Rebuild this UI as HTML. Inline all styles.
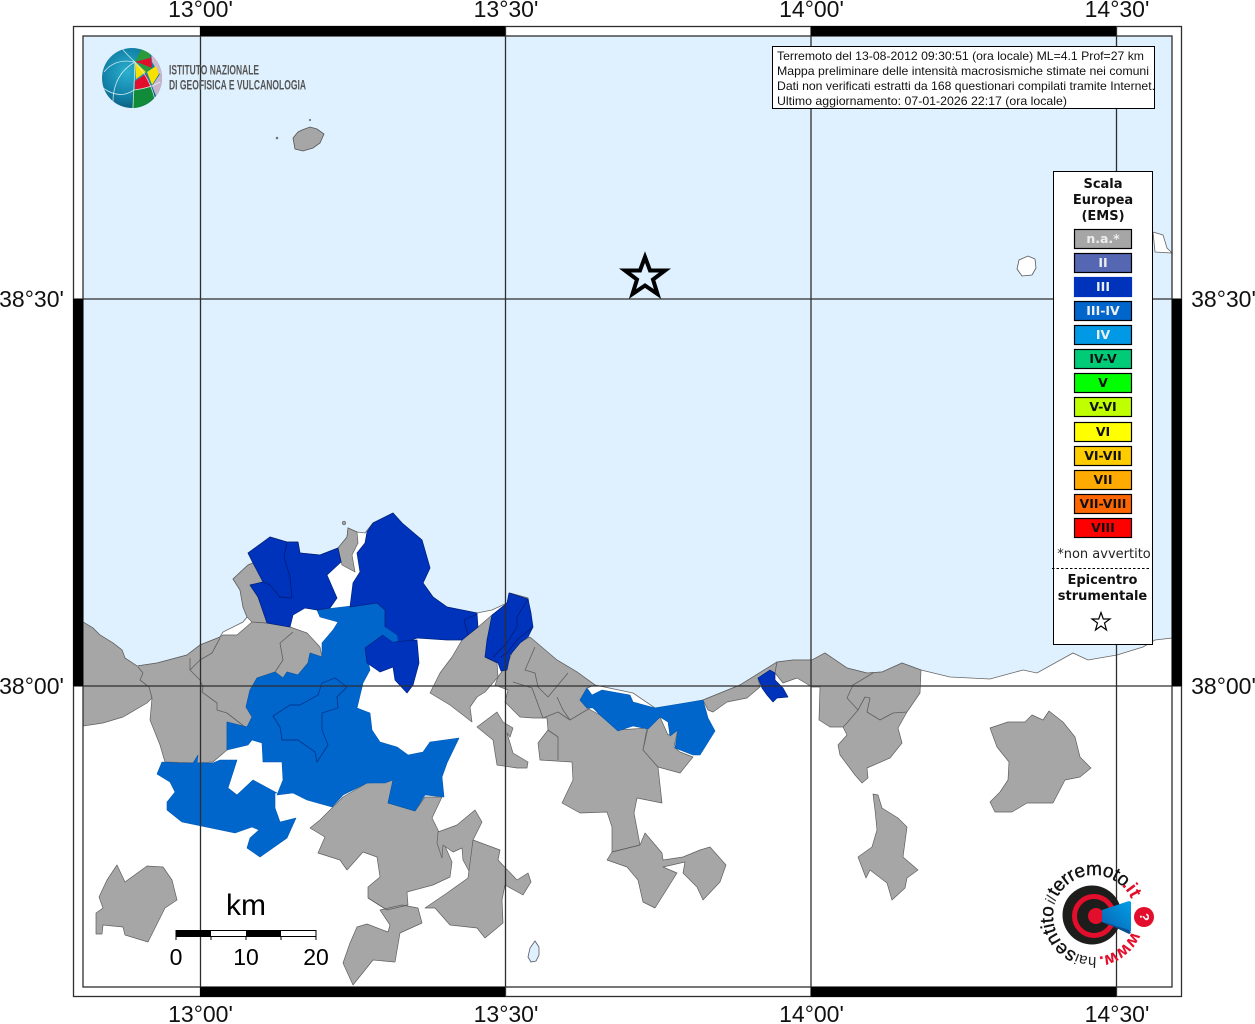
<!DOCTYPE html>
<html><head><meta charset="utf-8"><title>Mappa intensità macrosismiche</title>
<style>html,body{margin:0;padding:0;background:#fff}svg{display:block}
text{font-family:"Liberation Sans",sans-serif}
.d text,text.d{font-family:"DejaVu Sans",sans-serif}
.g polygon{fill:#a6a6a6;stroke:#5f5f5f;stroke-width:.7;stroke-linejoin:round}
.b3 polygon,polygon.b3{fill:#0033bb;stroke:#00237f;stroke-width:.7;stroke-linejoin:round}
.b4 polygon,polygon.b4{fill:#0066cc;stroke:#0059b3;stroke-width:.6;stroke-linejoin:round}
.il{fill:none;stroke:#5f5f5f;stroke-width:.8;stroke-linejoin:round}
.il2{fill:none;stroke:#00388f;stroke-width:.9;stroke-linejoin:round}
.il3{fill:none;stroke:#001f80;stroke-width:.9;stroke-linejoin:round}
.sw text{font-family:"DejaVu Sans",sans-serif;font-weight:bold;font-size:12.5px;text-anchor:middle}
.sw rect{stroke:#000;stroke-width:1.2}
</style></head><body>
<svg width="1255" height="1024" viewBox="0 0 1255 1024" xmlns="http://www.w3.org/2000/svg">
<defs>
<radialGradient id="gl" cx=".42" cy=".4" r=".7"><stop offset="0" stop-color="#2ab0cf"/><stop offset=".6" stop-color="#117fa5"/><stop offset="1" stop-color="#0b4f6e"/></radialGradient>
<linearGradient id="cone" x1="0" y1="1" x2="1" y2="0"><stop offset="0" stop-color="#0a5fb0"/><stop offset="1" stop-color="#00a0e6"/></linearGradient>
<clipPath id="ball"><circle cx="132" cy="78" r="30"/></clipPath>
<path id="ring" d="M1132 931.400 A41 41 0 0 1 1056 900.600 A41 41 0 0 1 1132 931.400"/>
</defs>
<rect width="1255" height="1024" fill="#fff"/>

<!-- sea -->
<polygon fill="#dff1fe" stroke="#666" stroke-width=".8" points="83,622 93,628 100,635 113,643 122,650 125,658 137,666 157,663 187,655 200,645 220,637 223,632 243,622 247,617 243,607 240,590 233,579 248,565 253,563 248,553 270,537 287,542 298,542 300,553 320,555 338,548 347,537 348,528 357,532 365,533 373,523 393,513 402,523 422,540 430,568 423,583 433,597 447,607 477,613 492,610 507,603 510,593 528,598 532,627 528,637 532,640 557,660 577,672 595,685 633,693 655,708 687,703 703,700 740,685 777,662 793,660 812,660 825,653 847,668 867,673 882,672 902,663 921,670 950,677 990,679 1023,670 1037,673 1073,653 1088,660 1117,655 1143,647 1155,640 1172,638 1172,36 83,36"/>
<polygon fill="#fff" stroke="#666" stroke-width=".8" points="1153,232 1163,235 1167,248 1172,253 1155,252"/>
<polygon fill="#fff" stroke="#555" stroke-width=".8" points="1019,260 1028,256 1035,259 1036,268 1032,275 1022,276 1017,269"/>
<polygon fill="#dff1fe" stroke="#556" stroke-width=".8" points="535,941 539,947 539,955 536,961 531,962 528,957 530,948"/>
<polygon fill="#a6a6a6" stroke="#555" stroke-width=".8" points="293,138 298,132 302,130 310,127 317,129 324,134 320,143 313,148 303,151 295,149"/>
<circle cx="277" cy="138" r="1.300" fill="#777"/><circle cx="310" cy="120" r="1.100" fill="#777"/><circle cx="344" cy="523" r="1.800" fill="#a6a6a6" stroke="#555" stroke-width=".6"/>

<g class="g">
<polygon points="83,622 93,628 100,635 113,643 122,650 125,658 137,666 157,663 187,655 200,645 220,637 223,635 237,635 252,622 267,623 290,627 307,633 320,647 322,657 310,653 308,663 298,675 287,672 283,678 275,672 257,678 250,690 246,707 252,717 247,727 227,722 227,750 213,762 197,763 165,762 160,745 150,720 152,698 147,703 123,717 103,723 83,726"/>
<polygon points="233,579 248,565 253,563 263,582 250,585 258,597 267,623 252,622 247,617 243,607 240,590"/>
<polygon points="338,548 347,537 348,528 357,532 358,543 352,555 355,572 342,565"/>
<polygon points="492,615 485,657 497,663 498,677 485,692 477,697 470,707 472,722 450,705 430,693 440,673 452,657 462,640 477,628"/>
<polygon points="530,637 557,660 577,672 595,685 587,688 580,700 587,708 600,715 618,730 647,728 643,750 658,767 662,803 637,798 634,813 640,845 612,852 612,827 607,812 580,813 562,803 573,780 572,762 540,760 538,743 548,730 547,718 533,718 520,717 505,702 508,690 495,685 498,677 508,663 515,645"/>
<polygon points="648,728 660,717 668,735 678,729 674,747 680,752 693,757 680,773 658,767 643,750"/>
<polygon points="703,700 740,685 777,662 775,673 758,678 760,687 747,698 727,702 713,712 708,710"/>
<polygon points="777,662 793,660 812,660 825,653 847,668 867,673 882,672 902,663 921,670 920,693 907,712 898,728 902,743 890,758 867,768 868,778 862,783 855,775 840,755 838,745 847,735 843,727 830,727 819,720 820,687 812,687 797,678 783,683 775,673"/>
<polygon points="873,794 878,795 882,808 898,818 907,827 903,857 918,870 907,878 905,888 892,900 887,883 870,870 866,878 858,857 872,847 877,830 875,810"/>
<polygon points="990,728 1008,722 1025,722 1032,715 1043,720 1049,711 1063,722 1075,737 1080,757 1091,768 1080,777 1065,780 1053,803 1027,803 1012,812 995,812 990,802 1000,792 1008,780 1009,762 997,747"/>
<polygon points="607,860 612,852 640,845 645,833 662,853 663,860 683,857 700,850 710,847 726,865 720,882 703,900 697,887 683,873 685,862 663,867 677,873 655,908 643,902 638,880 627,867"/>
<polygon points="477,727 497,712 503,722 513,728 510,737 507,733 513,753 528,762 527,768 517,768 497,765 493,740"/>
<polygon points="310,828 320,820 332,808 343,797 367,783 385,782 393,780 388,803 415,811 425,797 442,797 432,818 438,830 452,862 450,877 433,885 407,892 408,905 387,910 368,898 368,887 380,877 377,857 363,852 347,870 340,860 318,853 325,837"/>
<polygon points="438,832 457,825 475,810 482,822 473,840 470,873 463,860 462,848 453,852 443,845 442,858 437,843"/>
<polygon points="473,840 500,850 498,860 517,880 528,873 531,882 523,895 505,885 502,900 503,923 485,938 477,928 450,925 435,908 425,908 447,893 468,878"/>
<polygon points="380,910 402,905 418,908 422,923 400,933 395,962 373,960 353,985 343,963 350,943 357,927 367,924 388,932 390,925"/>
<polygon points="117,865 125,882 147,866 163,867 172,880 177,900 165,908 148,942 125,935 123,927 103,925 102,934 96,934 96,913 103,908 99,897 107,880"/>
</g>
<polyline class="il" points="138,667 143,673 140,680 149,687 152,698"/>
<polyline class="il" points="190,658 190,670 200,680 203,687 202,692 217,703 217,710 227,713 245,727"/>
<polyline class="il" points="190,670 200,660 212,653 220,638"/>
<polyline class="il" points="293,632 280,643 283,660 275,672"/>
<polyline class="il" points="535,647 525,670 535,673 538,687 548,697 568,673"/>
<polyline class="il" points="557,697 563,710 570,720 590,708"/>
<polyline class="il" points="513,682 532,688 543,718 558,712 570,720"/>
<polyline class="il" points="548,730 558,737 558,760"/>
<polyline class="il" points="873,673 853,685 847,698 858,710 847,723 843,727"/>
<polyline class="il" points="858,710 865,697 870,698 867,712 880,720 893,713 907,712"/>
<polyline class="il" points="612,852 640,845"/>
<polyline class="il" points="368,898 387,910 408,905"/>

<!-- intensity III-IV -->
<g class="b4">
<polygon points="317,610 377,603 386,610 385,627 398,635 393,645 375,648 365,648 370,670 363,683 357,708 370,713 372,730 380,742 397,747 408,755 423,752 430,742 459,738 447,763 442,777 444,797 425,795 415,811 388,803 393,780 385,783 367,783 343,795 332,807 307,800 293,793 277,795 283,780 282,762 263,762 262,743 252,740 248,745 227,750 227,722 247,727 252,717 246,707 250,690 257,678 275,672 283,678 287,672 298,675 308,663 310,653 322,657 322,643 333,630 338,622 320,617"/>
<polygon points="162,762 157,774 170,782 175,792 167,802 167,810 182,822 235,833 252,827 259,830 250,838 247,848 260,857 287,838 296,818 280,822 275,808 275,793 277,793 253,780 237,795 228,788 237,760 220,760 213,763 197,763 198,755 193,763 180,763"/>
<polygon points="580,700 587,688 592,695 602,690 630,695 633,702 655,708 703,700 708,718 715,731 700,755 693,755 675,748 678,730 670,736 668,722 660,717 657,720 648,729 633,726 618,731 600,715 593,708 587,708"/>
</g>
<polyline class="il2" points="347,687 335,678 322,683 318,695 300,705 290,705 273,716 280,727 282,740 298,740 315,752 317,762 328,745 322,730 322,713 338,708 337,697 347,687"/>
<!-- intensity III -->
<g class="b3">
<polygon points="248,553 270,537 287,542 298,542 300,553 320,555 338,548 341,562 327,575 337,598 330,608 317,610 305,608 293,615 290,627 267,623 258,597 250,585 263,582 253,563"/>
<polygon points="367,532 373,523 393,513 402,523 422,540 430,568 423,583 433,597 447,607 477,613 478,627 468,635 462,640 447,640 417,638 395,647 397,635 385,627 385,610 377,603 350,607 353,583 360,572 357,553 365,543"/>
<polygon points="383,635 393,642 417,640 419,663 413,685 407,693 395,680 393,667 380,672 367,663 365,648"/>
<polygon points="509,593 528,599 531,613 533,627 528,637 520,643 510,655 507,670 501,671 498,663 485,657 487,640 492,615 507,603"/>
<polygon points="758,678 770,670 775,673 775,680 783,688 788,697 777,698 773,702 767,695 762,688"/>
</g>
<polygon fill="#0066cc" points="385,627 397,635 398,641 393,642 383,635"/>
<polyline class="il3" points="287,542 284,557 290,577 292,598 280,597 270,585 263,582"/>
<polyline class="il3" points="468,635 464,620 477,614"/>
<polyline class="il3" points="528,599 517,617 517,627 507,643 493,657"/>
<polyline class="il3" points="533,627 517,640 507,653 501,657"/>

<!-- frame -->
<g fill="none" stroke="#2e2e2e" stroke-width="1.300">
<rect x="73.500" y="26.500" width="1108" height="970"/>
<rect x="83" y="36" width="1089" height="951"/>
<path d="M200.500 26V997M505.500 26V997M811 26V997M1116.500 26V997M73 299H1182M73 686H1182"/>
</g>
<g fill="#000">
<rect x="200" y="26" width="305" height="10"/><rect x="811" y="26" width="305" height="10"/>
<rect x="200" y="987" width="305" height="10"/><rect x="811" y="987" width="305" height="10"/>
<rect x="73" y="299" width="10" height="387"/><rect x="1172" y="299" width="10" height="387"/>
</g>

<!-- axis labels -->
<g font-size="23" text-anchor="middle" fill="#111">
<text x="200.500" y="17">13°00'</text><text x="506" y="17">13°30'</text><text x="811.500" y="17">14°00'</text><text x="1117" y="17">14°30'</text>
<text x="200.500" y="1022">13°00'</text><text x="506" y="1022">13°30'</text><text x="811.500" y="1022">14°00'</text><text x="1117" y="1022">14°30'</text>
<text x="31.500" y="307">38°30'</text><text x="31.500" y="694">38°00'</text>
<text x="1223.500" y="307">38°30'</text><text x="1223.500" y="694">38°00'</text>
</g>

<!-- star -->
<polygon points="645,257 650,270.500 665,270.500 653,279.500 657.500,294 645,285.500 632.500,294 637,279.500 625,270.500 640,270.500" fill="none" stroke="#000" stroke-width="4" stroke-linejoin="miter"/>

<!-- INGV logo -->
<circle cx="132" cy="78" r="30" fill="url(#gl)"/>
<g clip-path="url(#ball)">
<polygon points="135,62 142,48 150,50 150,58" fill="#2b9a3c"/>
<polygon points="135,62 150,58 151,56 152,68" fill="#e30e2c"/>
<polygon points="151,52 164,60 164,80 158,72 152,62" fill="#cdb9cd"/>
<polygon points="135,62 146,72 136,79" fill="#f6e100"/>
<polygon points="147,72 156,66 159,74 152,85" fill="#f6e100"/>
<polygon points="137,62 152,68 146,72" fill="#2b9a3c"/>
<polygon points="135,81 146,74 151,87 135,90" fill="#e30e2c"/>
<polygon points="152,86 160,74 165,82 156,96" fill="#c9b5cb"/>
<polygon points="133,90 151,87 154,97 150,108 132,108" fill="#118a3a"/>
<g fill="none" stroke="#e8f4f8" stroke-width=".8" stroke-opacity=".85">
<path d="M135 62L133 108M135 62Q112 75 113 105M135 62Q124 52 122 48M135 62Q150 78 155 100"/>
<path d="M104 72Q115 58 135 62M103 88Q120 100 134 90Q150 88 160 82M116 50Q135 44 150 52"/>
</g>
</g>
<text x="169" y="74.500" font-size="13.500" font-weight="bold" fill="#555" textLength="90" lengthAdjust="spacingAndGlyphs">ISTITUTO NAZIONALE</text>
<text x="169" y="89.500" font-size="13.500" font-weight="bold" fill="#555" textLength="137" lengthAdjust="spacingAndGlyphs">DI GEOFISICA E VULCANOLOGIA</text>

<!-- info box -->
<rect x="772.500" y="46.500" width="382" height="62" fill="#fff" stroke="#000"/>
<g font-size="12" fill="#111">
<text x="777" y="60" textLength="367" lengthAdjust="spacingAndGlyphs">Terremoto del 13-08-2012 09:30:51 (ora locale) ML=4.1 Prof=27 km</text>
<text x="777" y="75" textLength="372" lengthAdjust="spacingAndGlyphs">Mappa preliminare delle intensità macrosismiche stimate nei comuni</text>
<text x="777" y="90" textLength="378" lengthAdjust="spacingAndGlyphs">Dati non verificati estratti da 168 questionari compilati tramite Internet.</text>
<text x="777" y="105" textLength="290" lengthAdjust="spacingAndGlyphs">Ultimo aggiornamento: 07-01-2026 22:17 (ora locale)</text>
</g>

<!-- legend -->
<rect x="1053.500" y="171.500" width="99" height="473" fill="#fff" stroke="#000"/>
<g class="d" font-size="13" font-weight="bold" text-anchor="middle" fill="#111">
<text x="1103" y="188">Scala</text><text x="1103" y="204">Europea</text><text x="1103" y="220">(EMS)</text>
</g>
<g class="sw">
<rect x="1074.500" y="229.500" width="57" height="19" fill="#a6a6a6"/><text x="1103" y="243" fill="#eee">n.a.*</text>
<rect x="1074.500" y="253.500" width="57" height="19" fill="#5566b3"/><text x="1103" y="267" fill="#eee">II</text>
<rect x="1074.500" y="277.500" width="57" height="19" fill="#0033bb" style="stroke:#0033bb"/><text x="1103" y="291" fill="#eee">III</text>
<rect x="1074.500" y="301.500" width="57" height="19" fill="#0066cc"/><text x="1103" y="315" fill="#eee">III-IV</text>
<rect x="1074.500" y="325.500" width="57" height="19" fill="#0099e6"/><text x="1103" y="339" fill="#eee">IV</text>
<rect x="1074.500" y="349.500" width="57" height="19" fill="#00cc77"/><text x="1103" y="363" fill="#111">IV-V</text>
<rect x="1074.500" y="373.500" width="57" height="19" fill="#00ff00"/><text x="1103" y="387" fill="#111">V</text>
<rect x="1074.500" y="397.500" width="57" height="19" fill="#bfff00"/><text x="1103" y="411" fill="#111">V-VI</text>
<rect x="1074.500" y="422.500" width="57" height="19" fill="#ffff00"/><text x="1103" y="436" fill="#111">VI</text>
<rect x="1074.500" y="446.500" width="57" height="19" fill="#ffcc00"/><text x="1103" y="460" fill="#111">VI-VII</text>
<rect x="1074.500" y="470.500" width="57" height="19" fill="#ffaa00"/><text x="1103" y="484" fill="#111">VII</text>
<rect x="1074.500" y="494.500" width="57" height="19" fill="#ff6600"/><text x="1103" y="508" fill="#111">VII-VIII</text>
<rect x="1074.500" y="518.500" width="57" height="19" fill="#ff0000"/><text x="1103" y="532" fill="#111">VIII</text>
</g>
<text class="d" x="1104" y="558" font-size="13" text-anchor="middle" fill="#222">*non avvertito</text>
<line x1="1052" y1="568.500" x2="1151" y2="568.500" stroke="#000" stroke-dasharray="2.500 2"/>
<g class="d" font-size="13" font-weight="bold" text-anchor="middle" fill="#111">
<text x="1102.500" y="584">Epicentro</text><text x="1102.500" y="600">strumentale</text>
</g>
<polygon points="1101,612.500 1103.300,619 1110,619 1104.500,623 1106.500,630 1101,626 1095.500,630 1097.500,623 1092,619 1098.700,619" fill="#fff" stroke="#000" stroke-width="1.200"/>

<!-- scale bar -->
<text x="246" y="915" font-size="30" text-anchor="middle" fill="#000">km</text>
<rect x="176" y="930.500" width="140" height="6" fill="#fff" stroke="#000"/>
<rect x="176" y="930" width="35" height="6.500" fill="#000"/><rect x="246" y="930" width="35" height="6.500" fill="#000"/>
<path d="M176 930V940M211 936V940M246 936V940M281 936V940M316 930V940" stroke="#000" fill="none"/>
<g font-size="23" text-anchor="middle" fill="#000"><text x="176" y="965">0</text><text x="246" y="965">10</text><text x="316" y="965">20</text></g>

<!-- hai sentito logo -->
<circle cx="1092" cy="915" r="29.500" fill="#1d1d1b"/>
<circle cx="1094" cy="916" r="19.500" fill="none" stroke="#e30e2c" stroke-width="5"/>
<circle cx="1096" cy="916" r="8" fill="#e30e2c"/>
<polygon points="1102,910 1129,901 1131,902 1131,931 1129,933 1102,922" fill="url(#cone)"/>
<polygon points="1104,922 1129,930 1131,933 1129,934" fill="#0a4f96"/>
<circle cx="1144" cy="917" r="10" fill="#e30e2c"/>
<text x="1144" y="921" font-size="13" font-weight="bold" fill="#fff" text-anchor="middle" transform="rotate(90 1144 917)">?</text>
<text font-size="17" font-weight="bold" fill="#e30e2c" stroke="#e30e2c" stroke-width=".2"><textPath href="#ring" startOffset="0">www.</textPath></text>
<text font-size="15" fill="#222"><textPath href="#ring" startOffset="46">hai</textPath></text>
<text font-size="19" fill="#111" stroke="#111" stroke-width=".35"><textPath href="#ring" startOffset="66">sentito</textPath></text>
<text font-size="15" font-style="italic" fill="#333"><textPath href="#ring" startOffset="124">il</textPath></text>
<text font-size="19" fill="#111" stroke="#111" stroke-width=".35" letter-spacing="-.4"><textPath href="#ring" startOffset="132">terremoto</textPath></text>
<text font-size="19" font-weight="bold" fill="#e30e2c"><textPath href="#ring" startOffset="207">.it</textPath></text>
</svg>
</body></html>
